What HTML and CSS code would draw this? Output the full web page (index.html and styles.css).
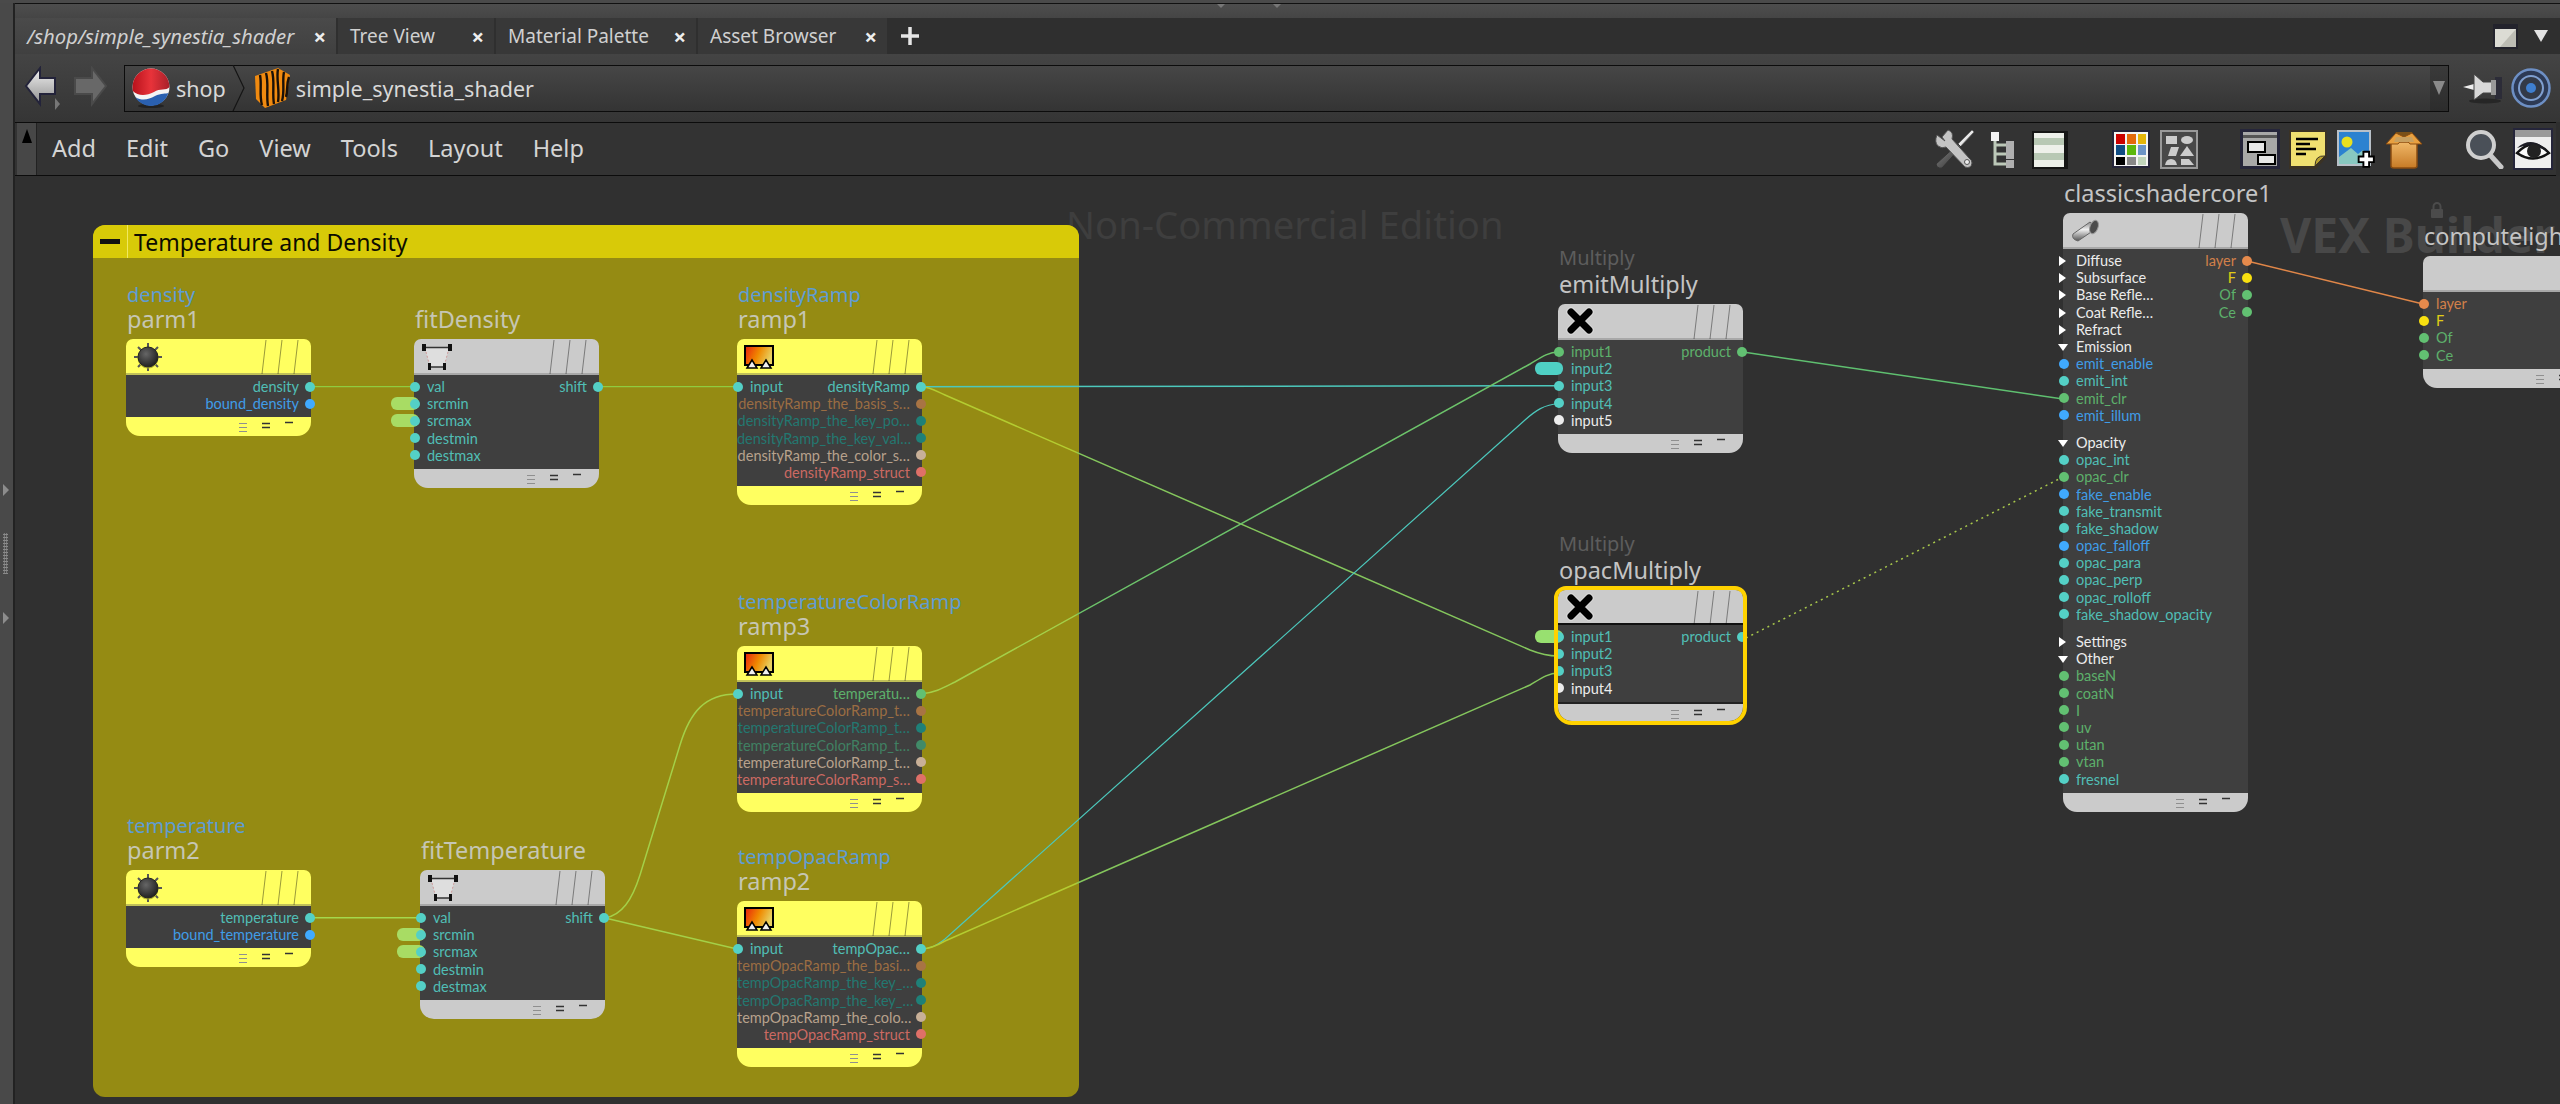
FILE: index.html
```html
<!DOCTYPE html>
<html lang="en">
<head>
  <meta charset="UTF-8" />
  <title>/shop/simple_synestia_shader</title>
  <link rel="stylesheet" href="styles.css">
</head>
<body>

  <!-- shared node glyphs -->
  <svg class="defs" width="0" height="0">
    <defs>
      <linearGradient id="rampFill" x1="0" x2="1" y1="0" y2="0.3">
        <stop offset="0" stop-color="#e8200c"/><stop offset="0.55" stop-color="#f08a00"/><stop offset="1" stop-color="#e8d060"/>
      </linearGradient>
      <radialGradient id="knobFill" cx="0.4" cy="0.35" r="0.7">
        <stop offset="0" stop-color="#666"/><stop offset="1" stop-color="#1c1c1c"/>
      </radialGradient>
      <linearGradient id="coreFill" x1="0" x2="0" y1="0" y2="1">
        <stop offset="0" stop-color="#8a8a8a"/><stop offset="0.4" stop-color="#f0f0f0"/><stop offset="1" stop-color="#555"/>
      </linearGradient>
      <linearGradient id="wireGreen" gradientUnits="userSpaceOnUse" x1="0" x2="2560" y1="0" y2="0">
        <stop offset="0.42" stop-color="#a4d048"/><stop offset="0.4215" stop-color="#6cc36a"/>
      </linearGradient>
      <linearGradient id="wireYellow" gradientUnits="userSpaceOnUse" x1="0" x2="2560" y1="0" y2="0">
        <stop offset="0.42" stop-color="#b4cc30"/><stop offset="0.4215" stop-color="#84c65c"/>
      </linearGradient>
      <linearGradient id="ballFill" x1="0" x2="1" y1="0" y2="0">
        <stop offset="0" stop-color="#b8121c"/><stop offset="0.5" stop-color="#e8333a"/><stop offset="1" stop-color="#a8202a"/>
      </linearGradient>
      <linearGradient id="arrowFill" x1="0" x2="0" y1="0" y2="1">
        <stop offset="0" stop-color="#f2f2f2"/><stop offset="1" stop-color="#8f8f8f"/>
      </linearGradient>
      <linearGradient id="boxFill" x1="0" x2="0" y1="0" y2="1">
        <stop offset="0" stop-color="#f0b868"/><stop offset="1" stop-color="#c67a26"/>
      </linearGradient>
      <linearGradient id="handleFill" x1="0" x2="1" y1="0" y2="1">
        <stop offset="0" stop-color="#8a8a8a"/><stop offset="1" stop-color="#2c2c2c"/>
      </linearGradient>
    </defs>
    <symbol id="flags" viewBox="0 0 185 36">
      <path d="M140 1 L136 35 M156 1 L152 35 M172 1 L168 35" fill="none" stroke="#000" stroke-opacity=".4" stroke-width="1"/>
    </symbol>
    <symbol id="footmarks" viewBox="0 0 185 19">
      <path d="M113 6.5h8 M113 10.5h8 M113 14.5h8" stroke="#8f8f8f" stroke-width="1.2"/>
      <path d="M136 6.5h8 M136 10.5h8" stroke="#333" stroke-width="1.5"/>
      <path d="M159 5.5h8" stroke="#333" stroke-width="1.5"/>
    </symbol>
    <symbol id="knob" viewBox="0 0 30 30">
      <path d="M15 1v4 M15 25v4 M1 15h4 M25 15h4 M5 5l3 3 M25 5l-3 3 M5 25l3-3 M25 25l-3-3" stroke="#555" stroke-width="2"/>
      <circle cx="15" cy="16" r="10.500" fill="#b8b830"/>
      <circle cx="15" cy="15" r="10" fill="url(#knobFill)" stroke="#222"/>
    </symbol>
    <symbol id="fit" viewBox="0 0 30 28">
      <path d="M3 5 L8 24 H22 L27 5Z" fill="#dedede"/>
      <path d="M3 5 L8 24 M27 5 L22 24" stroke="#d09a9a" stroke-width="1" stroke-dasharray="2 2"/>
      <path d="M3 4.5H27 M8 24H22" stroke="#333" stroke-width="1.6"/>
      <path d="M0 1h4v7H0z M26 1h4v7h-4z M6 20h3v7H6z M21 20h3v7h-3z" fill="#111"/>
    </symbol>
    <symbol id="ramp" viewBox="0 0 30 24">
      <rect x="1" y="1" width="28" height="19" fill="url(#rampFill)" stroke="#000" stroke-width="2"/>
      <path d="M3 23 L8 15 L13 23Z M17 23 L22 15 L27 23Z" fill="#f0f0f0" stroke="#000" stroke-width="1.500"/>
    </symbol>
    <symbol id="cross" viewBox="0 0 28 28">
      <path d="M5 5 L23 23 M23 5 L5 23" stroke="#d8d8d8" stroke-width="9" stroke-linecap="square"/>
      <path d="M5 5 L23 23 M23 5 L5 23" stroke="#000" stroke-width="7" stroke-linecap="round"/>
    </symbol>
    <symbol id="core" viewBox="0 0 30 24">
      <path d="M3 15 L20 3 L27 9 L8 22 Q1 20 3 15Z" fill="url(#coreFill)" stroke="#666"/>
      <ellipse cx="24" cy="8" rx="4" ry="7" transform="rotate(20 24 8)" fill="#4c4c4c" stroke="#999"/>
    </symbol>
  </svg>

  <div class="app">
    <div class="side">
      <span class="side-tri"></span>
      <span class="side-grip"></span>
      <span class="side-tri"></span>
    </div>

    <div class="main">
      <div class="sash"><i></i><i></i></div>

      <div class="tabs">
        <div class="tab tab-a active"><span class="tab-name">/shop/simple_synestia_shader</span><span class="tab-x">×</span></div>
        <div class="tab tab-b"><span class="tab-name">Tree View</span><span class="tab-x">×</span></div>
        <div class="tab tab-c"><span class="tab-name">Material Palette</span><span class="tab-x">×</span></div>
        <div class="tab tab-d"><span class="tab-name">Asset Browser</span><span class="tab-x">×</span></div>
        <svg class="tab-plus" width="20" height="20" viewBox="0 0 20 20"><path d="M10 1v18 M1 10h18" stroke="#e6e6e6" stroke-width="3.500"/></svg>
        <div class="tabs-end">
          <svg width="25" height="25" viewBox="0 0 25 25"><rect x="0" y="0" width="25" height="25" fill="#23232c"/><path d="M2 5h21v18H2z" fill="#dcdcd4"/><path d="M23 5v18H7z" fill="#bdbdb4"/></svg>
          <svg width="16" height="14" viewBox="0 0 16 14"><path d="M1 1h14L8 13z" fill="#e4e4e4"/></svg>
        </div>
      </div>

      <div class="pathbar">
        <svg class="nav" width="36" height="44" viewBox="0 0 36 44"><path d="M16 2 L2 20 L16 38 V28 H31 V12 H16Z" fill="url(#arrowFill)" stroke="#23233a" stroke-width="2"/><path d="M31 32 L36 38 L31 44Z" fill="#777"/></svg>
        <svg class="nav nav-fwd" width="36" height="44" viewBox="0 0 36 44"><path d="M20 2 L34 20 L20 38 V28 H3 V12 H20Z" fill="#686868" stroke="#4a4a4a" stroke-width="2"/></svg>
        <div class="pathbox">
          <svg class="path-icon" width="38" height="40" viewBox="0 0 38 40">
            <ellipse cx="19" cy="38" rx="13" ry="2" fill="#222"/>
            <circle cx="19" cy="19" r="18.500" fill="#f4f4f4"/>
            <path d="M0.500 19 A18.500 18.500 0 0 1 37.500 19 C34 23 28 20 22 24 C14 28 6 28 0.800 23Z" fill="url(#ballFill)"/>
            <path d="M3 29 C10 33 16 32 23 28 C29 25 34 26 36.500 25 A18.500 18.500 0 0 1 3 29Z" fill="#2a60b0"/>
          </svg>
          <span class="crumb">shop</span>
          <svg class="chev" width="14" height="46" viewBox="0 0 14 46"><path d="M1 0 L12 23 L1 46" fill="none" stroke="#151515" stroke-width="1.200"/></svg>
          <svg class="path-icon" width="38" height="42" viewBox="0 0 38 42">
            <path d="M2 9 L25 1 L37 8 L33 33 L12 41 L3 32Z" fill="#f08a10"/>
            <path d="M7 8 C9 18 6 28 9 38 M13 6 C16 16 13 28 15 39 M19 4 C22 14 19 26 21 37 M25 2 C23 12 27 24 25 35 M31 5 C29 14 32 24 29 34 M36 10 C33 18 35 24 33 30" stroke="#1a1008" stroke-width="2.400" fill="none"/>
          </svg>
          <span class="crumb crumb-last">simple_synestia_shader</span>
          <span class="path-drop"><i></i></span>
        </div>
        <svg class="pin" width="40" height="32" viewBox="0 0 40 32">
          <ellipse cx="22" cy="29" rx="16" ry="2.500" fill="#262626"/>
          <path d="M0 15 L11 12 V18Z" fill="#eee"/>
          <path d="M11 2 L20 10 H30 V21 H20 L11 28Z" fill="#d8d8d8" stroke="#444"/>
          <rect x="32" y="5" width="7" height="22" fill="#2c2c38"/>
          <rect x="28" y="8" width="5" height="15" fill="#999"/>
        </svg>
        <svg class="target" width="40" height="40" viewBox="0 0 40 40">
          <circle cx="20" cy="20" r="18.500" fill="#2d3a55" stroke="#6d8fc4" stroke-width="2.500"/>
          <circle cx="20" cy="20" r="12" fill="#333a48" stroke="#7f9fd0" stroke-width="2"/>
          <circle cx="20" cy="20" r="5" fill="#3f7fd0"/>
        </svg>
      </div>

      <div class="menubar">
        <div class="menu-handle"><i></i></div>
        <nav class="menus">
          <span>Add</span><span>Edit</span><span>Go</span><span>View</span><span>Tools</span><span>Layout</span><span>Help</span>
        </nav>
        <div class="tools">
          <svg width="40" height="40" viewBox="0 0 40 40">
            <!-- screwdriver -->
            <path d="M38 1 L40 3 L25 19 L22 17Z" fill="#e8e8e8" stroke="#666" stroke-width=".8"/>
            <path d="M24 15 L27 18 L8 39 Q3 40 2 35Z" fill="url(#handleFill)" stroke="#333"/>
            <!-- wrench -->
            <path d="M14 1 L8 8 L11 12 L3 6 Q0 13 4 17 Q8 20 12 18 L31 38 Q37 40 38 34 Q38 31 35 29 L18 10 Q20 3 14 1Z" fill="#c4c4c4" stroke="#555"/>
            <circle cx="33" cy="33" r="2.500" fill="#eee" stroke="#555"/>
          </svg>
          <svg width="40" height="40" viewBox="0 0 40 40">
            <path d="M13 10 V35 H24 M13 16 H24 M13 25 H24" fill="none" stroke="#bcc8b8" stroke-width="3"/>
            <rect x="9" y="3" width="8" height="9" fill="#f2f2f2"/>
            <rect x="24" y="12" width="8" height="9" fill="#b0b0b0"/><rect x="24" y="21" width="8" height="9" fill="#b0b0b0"/><rect x="24" y="31" width="8" height="8" fill="#b0b0b0"/>
          </svg>
          <svg width="40" height="40" viewBox="0 0 40 40">
            <rect x="2" y="2" width="36" height="38" fill="#161616"/>
            <rect x="4" y="4" width="30" height="34" fill="#eef0ea"/>
            <path d="M4 9h30v7H4z M4 24h30v7H4z" fill="#b8c8b4"/>
          </svg>
          <svg class="tool-gap" width="40" height="40" viewBox="0 0 40 40">
            <rect x="1" y="1" width="38" height="38" fill="#25253a"/>
            <rect x="3" y="3" width="34" height="34" fill="#f4f4f4"/>
            <path d="M5 5h9v10H5z" fill="#c00"/><path d="M16 5h9v10h-9z" fill="#e46a0c"/><path d="M27 5h8v10h-8z" fill="#e4b40c"/>
            <path d="M5 16h9v10H5z" fill="#104c84"/><path d="M16 16h9v10h-9z" fill="#5cb80c"/><path d="M27 16h8v10h-8z" fill="#6c94c8"/>
            <path d="M5 28h9v8H5z" fill="#000"/><path d="M16 28h9v8h-9z" fill="#888"/><path d="M27 28h8v8h-8z" fill="#c0d4bc"/>
          </svg>
          <svg width="40" height="40" viewBox="0 0 40 40">
            <rect x="2" y="2" width="36" height="37" fill="#484848" stroke="#999" stroke-width="2"/>
            <path d="M7 7h11v8H7z" fill="#ccc"/><ellipse cx="28" cy="11" rx="6" ry="4" fill="#ccc"/>
            <path d="M9 27 L12 18 H20 L17 27Z" fill="#ccc"/><path d="M28 17 L35 27 H21Z" fill="#ccc"/>
            <path d="M6 36 Q7 30 12 30 Q17 30 18 36Z" fill="#ccc"/><path d="M22 30 H30 L35 36 H22Z" fill="#ccc"/>
          </svg>
          <svg class="tool-gap" width="40" height="40" viewBox="0 0 40 40">
            <rect x="0" y="0" width="40" height="40" fill="#25253a"/>
            <rect x="3" y="3" width="34" height="34" fill="#a8a8a8"/>
            <rect x="3" y="6" width="34" height="3" fill="#555"/>
            <rect x="8" y="13" width="17" height="10" fill="#e8e8e8" stroke="#000" stroke-width="2"/>
            <rect x="18" y="26" width="17" height="9" fill="#e8e8e8" stroke="#000" stroke-width="2"/>
          </svg>
          <svg width="40" height="40" viewBox="0 0 40 40">
            <path d="M1 1 H39 V28 L28 40 H1Z" fill="#3a3224"/>
            <path d="M3 3 H37 V27 L27 37 H3Z" fill="#f0e070"/>
            <path d="M8 10h22 M8 15h14 M8 20h20 M8 25h10" stroke="#000" stroke-width="2.600"/>
            <path d="M37 27 Q27 26 27 37Z" fill="#b8a030" stroke="#3a3224"/>
          </svg>
          <svg width="40" height="40" viewBox="0 0 40 40">
            <rect x="1" y="1" width="34" height="36" fill="#b8c0c8"/>
            <rect x="3" y="3" width="30" height="32" fill="#2c82d0"/>
            <circle cx="11" cy="13" r="5.500" fill="#e8e020"/>
            <path d="M3 35 V28 L15 19 L22 25 L27 21 L33 28 V35Z" fill="#88c8c0"/>
            <path d="M27 31h5v-5h6v5h5v6h-5v5h-6v-5h-5z" transform="translate(-3 -2) scale(.95)" fill="#fff" stroke="#000" stroke-width="2"/>
          </svg>
          <svg width="40" height="40" viewBox="0 0 40 40">
            <path d="M7 13 V37 Q7 39 10 39 H30 Q33 39 33 37 V13Z" fill="url(#boxFill)" stroke="#8a4c10" stroke-width="1.500"/>
            <path d="M7 13 L12 3 H28 L33 13Z" fill="#7a5018"/>
            <path d="M12 4 L2 15 H14 L20 8 L26 15 H38 L28 4 L20 8Z" fill="#e8a040" stroke="#8a4c10"/>
            <path d="M12 8 H28 L30 13 H10Z" fill="#c8a060"/>
          </svg>
          <svg class="tool-gap" width="40" height="40" viewBox="0 0 40 40">
            <path d="M26 27 L36 38" stroke="#c8c8c8" stroke-width="5" stroke-linecap="round"/>
            <circle cx="16" cy="16" r="13" fill="#4a5058" stroke="#cfcfcf" stroke-width="4"/>
          </svg>
          <svg width="40" height="42" viewBox="0 0 40 42">
            <rect x="0" y="0" width="40" height="42" fill="#25253a"/>
            <rect x="2" y="2" width="36" height="38" fill="#eeeeee"/>
            <rect x="2" y="2" width="36" height="7" fill="#9a9a9a"/>
            <path d="M4 25 Q20 8 36 25 Q20 36 4 25Z" fill="#fafafa" stroke="#111" stroke-width="2.500"/>
            <path d="M4 20 Q20 6 36 25 Q20 13 4 20Z" fill="#1c1c24"/>
            <circle cx="21" cy="23" r="7" fill="#222"/>
          </svg>
        </div>
      </div>

      <div class="canvas">
        <div class="graph">

          <div class="wm wm-edition">Non-Commercial Edition</div>
          <div class="wm wm-vex">VEX Builder</div>
          <svg class="wm-lock" width="14" height="16" viewBox="0 0 14 16"><path d="M3.500 7 V4.500 A3.500 3.500 0 0 1 10.500 4.500 V7" fill="none" stroke="#4b4b4b" stroke-width="2"/><rect x="1" y="7" width="12" height="9" rx="1" fill="#4b4b4b"/></svg>

          <section class="netbox">
            <header class="netbox-head">
              <span class="netbox-min"><i></i></span>
              <span class="netbox-title">Temperature and Density</span>
            </header>
          </section>

          <svg class="wires" width="2560" height="1104" viewBox="0 0 2560 1104" fill="none">
            <path d="M311 386.700 L414 386.700" stroke="#8edc4c"/>
            <path d="M599 386.700 L737 386.700" stroke="#8edc4c"/>
            <path d="M311 917.700 L420 917.700" stroke="#a4d84c" stroke-width="1.600"/>
            <path d="M922 386.700 L1558 385.700" stroke="#4cc8bc" stroke-width="1.500"/>
            <path d="M922 387 C930 387 936 391 945 395 L1530 650 C1540 654 1548 656 1558 656" stroke="url(#wireYellow)" stroke-width="1.500"/>
            <path d="M605 918 C622 915 632 900 640 875 L680 745 C690 712 705 694 737 694" stroke="#a4d048" stroke-width="1.500"/>
            <path d="M605 918 L737 949" stroke="#a4d048" stroke-width="1.500"/>
            <path d="M922 693.700 C935 693 945 687 955 682 L1530 364 C1540 358 1548 352 1558 352" stroke="url(#wireGreen)" stroke-width="1.500"/>
            <path d="M921 949 C932 949 938 944 945 939 L1525 420 C1535 411 1545 404 1558 404" stroke="#4cc8bc" stroke-width="1.200"/>
            <path d="M921 949 C930 949 938 945 945 941 L1530 685 C1540 679 1548 673 1558 673" stroke="url(#wireYellow)" stroke-width="1.500"/>
            <path d="M1743 352 L2063 399" stroke="#5fc070" stroke-width="1.500"/>
            <path d="M1746 638 L2063 477" stroke="#a8c84c" stroke-width="1.500" stroke-dasharray="2 4"/>
            <path d="M2247 261 L2423 304" stroke="#e08648" stroke-width="1.500"/>
          </svg>

          <!-- parm1 -->
          <article class="node yellow n-parm1">
            <div class="caption"><span class="sub">density</span><span class="name">parm1</span></div>
            <div class="head"><svg class="ico ico-knob"><use href="#knob"/></svg><svg class="flags"><use href="#flags"/></svg></div>
            <div class="body">
              <div class="row"><span class="lbl out teal">density</span><i class="port r teal"></i></div>
              <div class="row"><span class="lbl out blue">bound_density</span><i class="port r blue"></i></div>
            </div>
            <div class="foot"><svg class="marks"><use href="#footmarks"/></svg></div>
          </article>

          <!-- fitDensity -->
          <article class="node grey n-fitdensity">
            <div class="caption"><span class="name">fitDensity</span></div>
            <div class="head"><svg class="ico ico-fit"><use href="#fit"/></svg><svg class="flags"><use href="#flags"/></svg></div>
            <div class="body">
              <div class="row"><i class="port l teal"></i><span class="lbl teal">val</span><span class="lbl out teal">shift</span><i class="port r teal"></i></div>
              <div class="row"><b class="stub lime"></b><i class="port l teal"></i><span class="lbl teal">srcmin</span></div>
              <div class="row"><b class="stub lime"></b><i class="port l teal"></i><span class="lbl teal">srcmax</span></div>
              <div class="row"><i class="port l teal"></i><span class="lbl teal">destmin</span></div>
              <div class="row"><i class="port l teal"></i><span class="lbl teal">destmax</span></div>
            </div>
            <div class="foot"><svg class="marks"><use href="#footmarks"/></svg></div>
          </article>

          <!-- ramp1 -->
          <article class="node yellow n-ramp1">
            <div class="caption"><span class="sub">densityRamp</span><span class="name">ramp1</span></div>
            <div class="head"><svg class="ico ico-ramp"><use href="#ramp"/></svg><svg class="flags"><use href="#flags"/></svg></div>
            <div class="body">
              <div class="row"><i class="port l teal"></i><span class="lbl teal">input</span><span class="lbl out teal">densityRamp</span><i class="port r teal"></i></div>
              <div class="row"><span class="lbl out brown">densityRamp_the_basis_s…</span><i class="port r brown"></i></div>
              <div class="row"><span class="lbl out dteal">densityRamp_the_key_po…</span><i class="port r dteal"></i></div>
              <div class="row"><span class="lbl out dteal">densityRamp_the_key_val…</span><i class="port r dteal"></i></div>
              <div class="row"><span class="lbl out tan">densityRamp_the_color_s…</span><i class="port r tan"></i></div>
              <div class="row"><span class="lbl out pink">densityRamp_struct</span><i class="port r pink"></i></div>
            </div>
            <div class="foot"><svg class="marks"><use href="#footmarks"/></svg></div>
          </article>

          <!-- ramp3 -->
          <article class="node yellow n-ramp3">
            <div class="caption"><span class="sub">temperatureColorRamp</span><span class="name">ramp3</span></div>
            <div class="head"><svg class="ico ico-ramp"><use href="#ramp"/></svg><svg class="flags"><use href="#flags"/></svg></div>
            <div class="body">
              <div class="row"><i class="port l teal"></i><span class="lbl teal">input</span><span class="lbl out green">temperatu…</span><i class="port r green"></i></div>
              <div class="row"><span class="lbl out brown">temperatureColorRamp_t…</span><i class="port r brown"></i></div>
              <div class="row"><span class="lbl out dteal">temperatureColorRamp_t…</span><i class="port r dteal"></i></div>
              <div class="row"><span class="lbl out dgreen">temperatureColorRamp_t…</span><i class="port r dgreen"></i></div>
              <div class="row"><span class="lbl out tan">temperatureColorRamp_t…</span><i class="port r tan"></i></div>
              <div class="row"><span class="lbl out pink">temperatureColorRamp_s…</span><i class="port r pink"></i></div>
            </div>
            <div class="foot"><svg class="marks"><use href="#footmarks"/></svg></div>
          </article>

          <!-- parm2 -->
          <article class="node yellow n-parm2">
            <div class="caption"><span class="sub">temperature</span><span class="name">parm2</span></div>
            <div class="head"><svg class="ico ico-knob"><use href="#knob"/></svg><svg class="flags"><use href="#flags"/></svg></div>
            <div class="body">
              <div class="row"><span class="lbl out teal">temperature</span><i class="port r teal"></i></div>
              <div class="row"><span class="lbl out blue">bound_temperature</span><i class="port r blue"></i></div>
            </div>
            <div class="foot"><svg class="marks"><use href="#footmarks"/></svg></div>
          </article>

          <!-- fitTemperature -->
          <article class="node grey n-fittemp">
            <div class="caption"><span class="name">fitTemperature</span></div>
            <div class="head"><svg class="ico ico-fit"><use href="#fit"/></svg><svg class="flags"><use href="#flags"/></svg></div>
            <div class="body">
              <div class="row"><i class="port l teal"></i><span class="lbl teal">val</span><span class="lbl out teal">shift</span><i class="port r teal"></i></div>
              <div class="row"><b class="stub lime"></b><i class="port l teal"></i><span class="lbl teal">srcmin</span></div>
              <div class="row"><b class="stub lime"></b><i class="port l teal"></i><span class="lbl teal">srcmax</span></div>
              <div class="row"><i class="port l teal"></i><span class="lbl teal">destmin</span></div>
              <div class="row"><i class="port l teal"></i><span class="lbl teal">destmax</span></div>
            </div>
            <div class="foot"><svg class="marks"><use href="#footmarks"/></svg></div>
          </article>

          <!-- ramp2 -->
          <article class="node yellow n-ramp2">
            <div class="caption"><span class="sub">tempOpacRamp</span><span class="name">ramp2</span></div>
            <div class="head"><svg class="ico ico-ramp"><use href="#ramp"/></svg><svg class="flags"><use href="#flags"/></svg></div>
            <div class="body">
              <div class="row"><i class="port l teal"></i><span class="lbl teal">input</span><span class="lbl out teal">tempOpac…</span><i class="port r teal"></i></div>
              <div class="row"><span class="lbl out brown">tempOpacRamp_the_basi…</span><i class="port r brown"></i></div>
              <div class="row"><span class="lbl out dteal">tempOpacRamp_the_key_…</span><i class="port r dteal"></i></div>
              <div class="row"><span class="lbl out dteal">tempOpacRamp_the_key_…</span><i class="port r dteal"></i></div>
              <div class="row"><span class="lbl out tan">tempOpacRamp_the_colo…</span><i class="port r tan"></i></div>
              <div class="row"><span class="lbl out pink">tempOpacRamp_struct</span><i class="port r pink"></i></div>
            </div>
            <div class="foot"><svg class="marks"><use href="#footmarks"/></svg></div>
          </article>

          <!-- emitMultiply -->
          <article class="node grey n-emit">
            <div class="caption"><span class="sub dim">Multiply</span><span class="name bright">emitMultiply</span></div>
            <div class="head"><svg class="ico ico-x"><use href="#cross"/></svg><svg class="flags"><use href="#flags"/></svg></div>
            <div class="body">
              <div class="row"><i class="port l green"></i><span class="lbl green">input1</span><span class="lbl out green">product</span><i class="port r green"></i></div>
              <div class="row"><b class="stub aqua"></b><span class="lbl teal">input2</span></div>
              <div class="row"><i class="port l teal"></i><span class="lbl teal">input3</span></div>
              <div class="row"><i class="port l teal"></i><span class="lbl teal">input4</span></div>
              <div class="row"><i class="port l white"></i><span class="lbl white">input5</span></div>
            </div>
            <div class="foot"><svg class="marks"><use href="#footmarks"/></svg></div>
          </article>

          <!-- opacMultiply -->
          <article class="node grey selected n-opac">
            <div class="caption"><span class="sub dim">Multiply</span><span class="name bright">opacMultiply</span></div>
            <div class="head"><svg class="ico ico-x"><use href="#cross"/></svg><svg class="flags"><use href="#flags"/></svg></div>
            <div class="body">
              <div class="row"><b class="stub mint"></b><i class="port l teal"></i><span class="lbl teal">input1</span><span class="lbl out teal">product</span><i class="port r teal"></i></div>
              <div class="row"><i class="port l teal"></i><span class="lbl teal">input2</span></div>
              <div class="row"><i class="port l teal"></i><span class="lbl teal">input3</span></div>
              <div class="row"><i class="port l white"></i><span class="lbl white">input4</span></div>
            </div>
            <div class="foot"><svg class="marks"><use href="#footmarks"/></svg></div>
          </article>

          <!-- classicshadercore1 -->
          <article class="node grey n-core">
            <div class="caption"><span class="name bright">classicshadercore1</span></div>
            <div class="head"><svg class="ico ico-core"><use href="#core"/></svg><svg class="flags"><use href="#flags"/></svg></div>
            <div class="body">
              <div class="row"><i class="tri closed"></i><span class="lbl white">Diffuse</span><span class="lbl out orange">layer</span><i class="port r orange"></i></div>
              <div class="row"><i class="tri closed"></i><span class="lbl white">Subsurface</span><span class="lbl out yellowc">F</span><i class="port r yellowc"></i></div>
              <div class="row"><i class="tri closed"></i><span class="lbl white">Base Refle…</span><span class="lbl out green">Of</span><i class="port r green"></i></div>
              <div class="row"><i class="tri closed"></i><span class="lbl white">Coat Refle…</span><span class="lbl out green">Ce</span><i class="port r green"></i></div>
              <div class="row"><i class="tri closed"></i><span class="lbl white">Refract</span></div>
              <div class="row"><i class="tri open"></i><span class="lbl white">Emission</span></div>
              <div class="row"><i class="port l blue"></i><span class="lbl blue">emit_enable</span></div>
              <div class="row"><i class="port l teal"></i><span class="lbl teal">emit_int</span></div>
              <div class="row"><i class="port l green"></i><span class="lbl green">emit_clr</span></div>
              <div class="row"><i class="port l blue"></i><span class="lbl blue">emit_illum</span></div>
              <div class="row-gap"></div>
              <div class="row"><i class="tri open"></i><span class="lbl white">Opacity</span></div>
              <div class="row"><i class="port l teal"></i><span class="lbl teal">opac_int</span></div>
              <div class="row"><i class="port l green"></i><span class="lbl green">opac_clr</span></div>
              <div class="row"><i class="port l blue"></i><span class="lbl blue">fake_enable</span></div>
              <div class="row"><i class="port l teal"></i><span class="lbl teal">fake_transmit</span></div>
              <div class="row"><i class="port l teal"></i><span class="lbl teal">fake_shadow</span></div>
              <div class="row"><i class="port l blue"></i><span class="lbl blue">opac_falloff</span></div>
              <div class="row"><i class="port l teal"></i><span class="lbl teal">opac_para</span></div>
              <div class="row"><i class="port l teal"></i><span class="lbl teal">opac_perp</span></div>
              <div class="row"><i class="port l teal"></i><span class="lbl teal">opac_rolloff</span></div>
              <div class="row"><i class="port l teal"></i><span class="lbl teal">fake_shadow_opacity</span></div>
              <div class="row-gap"></div>
              <div class="row"><i class="tri closed"></i><span class="lbl white">Settings</span></div>
              <div class="row"><i class="tri open"></i><span class="lbl white">Other</span></div>
              <div class="row"><i class="port l green"></i><span class="lbl green">baseN</span></div>
              <div class="row"><i class="port l green"></i><span class="lbl green">coatN</span></div>
              <div class="row"><i class="port l green"></i><span class="lbl green">I</span></div>
              <div class="row"><i class="port l green"></i><span class="lbl green">uv</span></div>
              <div class="row"><i class="port l green"></i><span class="lbl green">utan</span></div>
              <div class="row"><i class="port l green"></i><span class="lbl green">vtan</span></div>
              <div class="row"><i class="port l teal"></i><span class="lbl teal">fresnel</span></div>
            </div>
            <div class="foot"><svg class="marks"><use href="#footmarks"/></svg></div>
          </article>

          <!-- computelight, runs off the right edge -->
          <article class="node grey n-light">
            <div class="caption"><span class="name bright">computelight1</span></div>
            <div class="head"></div>
            <div class="body">
              <div class="row"><i class="port l orange"></i><span class="lbl orange">layer</span></div>
              <div class="row"><i class="port l yellowc"></i><span class="lbl yellowc">F</span><span class="lbl out green">clr</span></div>
              <div class="row"><i class="port l green"></i><span class="lbl green">Of</span></div>
              <div class="row"><i class="port l green"></i><span class="lbl green">Ce</span></div>
            </div>
            <div class="foot"><svg class="marks"><use href="#footmarks"/></svg></div>
          </article>

        </div>
      </div>
    </div>
  </div>

</body>
</html>
```

FILE: styles.css
```css
* {
  margin: 0;
  padding: 0;
  box-sizing: border-box;
}

html, body {
  width: 2560px;
  height: 1104px;
  overflow: hidden;
}

body {
  background: #2e2e2e;
  color: #cfcfcf;
  font-family: "Noto Sans", sans-serif;
}

.defs {
  position: absolute;
}

.app {
  display: flex;
  height: 1104px;
  border-top: 3px solid #4a4a4a;
}

/* Left sash */
.side {
  width: 15px;
  flex: none;
  background: #494949;
  border-right: 2px solid #222;
  display: flex;
  flex-direction: column;
  align-items: center;
  padding-top: 481px;
  padding-right: 2px;
}

.side-tri {
  width: 0;
  height: 0;
  border-left: 6px solid #8c8c8c;
  border-top: 6px solid transparent;
  border-bottom: 6px solid transparent;
}

.side-grip {
  width: 5px;
  height: 41px;
  margin: 37px 0 38px;
  background-image: radial-gradient(#8a8a8a 1px, transparent 1px);
  background-size: 2.500px 3px;
}

.main {
  flex: 1;
  min-width: 0;
  display: flex;
  flex-direction: column;
}

.sash {
  height: 15px;
  background: linear-gradient(#4d4d4d, #454545);
  border-top: 1px solid #111;
  display: flex;
  gap: 48px;
  padding-left: 1202px;
}

.sash i {
  width: 0;
  height: 0;
  border-top: 4px solid #777;
  border-left: 4px solid transparent;
  border-right: 4px solid transparent;
}

/* Tabs */
.tabs {
  height: 36px;
  display: flex;
  align-items: stretch;
  background: #2f2f2f;
}

.tab {
  display: flex;
  align-items: center;
  justify-content: space-between;
  margin-right: 2px;
  padding: 0 10px 0 12px;
  background: #383838;
  font-size: 19px;
  color: #d0d0d0;
}

.tab.active {
  background: linear-gradient(#4a4a4a, #404040);
  padding-left: 12px;
  font-size: 20.300px;
  font-style: italic;
}

.tab-a { width: 321px; }
.tab-b { width: 156px; }
.tab-c { width: 200px; }
.tab-d { width: 189px; }

.tab-x {
  font-weight: 700;
  font-style: normal;
  font-size: 22px;
  color: #eee;
}

.tab-plus {
  align-self: center;
  margin-left: 11px;
}

.tabs-end {
  margin-left: auto;
  padding-right: 11px;
  display: flex;
  align-items: center;
  gap: 15px;
}

/* Path bar */
.pathbar {
  height: 68px;
  flex: none;
  display: flex;
  align-items: center;
  background: linear-gradient(#444, #353535);
  padding-left: 9px;
}

.nav {
  margin-right: 12px;
}

.nav-fwd {
  margin-right: 16px;
}

.pathbox {
  width: 2325px;
  height: 47px;
  display: flex;
  align-items: center;
  border: 1px solid #0c0c0c;
  background: linear-gradient(#464646, #343434);
  padding-left: 7px;
  font-size: 21.500px;
  color: #d8d8d8;
}

.crumb {
  margin-left: 6px;
}

.chev {
  margin: 0 7px 0 6px;
}

.crumb-last {
  margin-left: 5px;
}

.path-drop {
  margin-left: auto;
  width: 18px;
  height: 100%;
  display: flex;
  align-items: center;
  justify-content: center;
  background: linear-gradient(#3a3a3a, #2c2c2c);
}

.path-drop i {
  width: 0;
  height: 0;
  border-top: 14px solid #8a8a8a;
  border-left: 6px solid transparent;
  border-right: 6px solid transparent;
}

.pin {
  margin-left: 14px;
}

.target {
  margin-left: 8px;
}

/* Menu bar */
.menubar {
  height: 54px;
  flex: none;
  display: flex;
  align-items: center;
  background: #333;
  border-top: 1px solid #0c0c0c;
  border-bottom: 1px solid #0c0c0c;
  margin-right: 4px;
}

.menu-handle {
  width: 20px;
  height: 100%;
  margin-left: 2px;
  background: #474747;
  border-right: 1px solid #222;
  display: flex;
  justify-content: center;
  padding-top: 6px;
}

.menu-handle i {
  width: 0;
  height: 0;
  border-bottom: 14px solid #000;
  border-left: 5px solid transparent;
  border-right: 5px solid transparent;
}

.menus {
  display: flex;
  gap: 30px;
  padding-left: 15px;
  padding-bottom: 2px;
  font-size: 23.500px;
  color: #d4d4d4;
}

.tools {
  margin-left: auto;
  display: flex;
  align-items: center;
  gap: 8px;
  padding-right: 3px;
}

.tool-gap {
  margin-left: 33px;
}

/* Node canvas */
.canvas {
  flex: 1;
  position: relative;
  overflow: hidden;
  background: #303030;
}

/* same coordinates as the window, so the node positions read straight */
.graph {
  position: absolute;
  left: -15px;
  top: -176px;
  width: 2560px;
  height: 1104px;
}

.wm {
  position: absolute;
  white-space: nowrap;
  color: #3e3e3e;
}

.wm-edition {
  left: 1066px;
  top: 199px;
  font-size: 38.200px;
  line-height: 50px;
}

.wm-vex {
  left: 2280px;
  top: 205px;
  font-size: 48px;
  line-height: 60px;
  font-weight: 700;
  color: #484848;
}

.wm-lock {
  position: absolute;
  left: 2430px;
  top: 202px;
}

.netbox {
  position: absolute;
  left: 93px;
  top: 225px;
  width: 986px;
  height: 872px;
  background: #958b13;
  border-radius: 12px;
  overflow: hidden;
}

.netbox-head {
  height: 33px;
  display: flex;
  align-items: center;
  background: #d8ca08;
  color: #0c0c00;
  font-size: 23px;
}

.netbox-min {
  width: 35px;
  height: 100%;
  display: flex;
  align-items: center;
  justify-content: center;
  border-right: 1px solid #f0e860;
}

.netbox-min i {
  width: 20px;
  height: 5px;
  background: #111;
}

.netbox-title {
  margin-left: 6px;
}

.wires {
  position: absolute;
  left: 0;
  top: 0;
}

/* Nodes */
.node {
  position: absolute;
  width: 185px;
  font-family: "Lato", sans-serif;
  font-size: 14.500px;
}

.n-parm1 { left: 126px; top: 339px; }
.n-fitdensity { left: 414px; top: 339px; }
.n-ramp1 { left: 737px; top: 339px; }
.n-ramp3 { left: 737px; top: 646px; }
.n-parm2 { left: 126px; top: 870px; }
.n-fittemp { left: 420px; top: 870px; }
.n-ramp2 { left: 737px; top: 901px; }
.n-emit { left: 1558px; top: 304px; }
.n-opac { left: 1558px; top: 590px; }
.n-core { left: 2063px; top: 213px; }
.n-light { left: 2423px; top: 256px; }

.caption {
  position: absolute;
  left: 1px;
  bottom: calc(100% + 8px);
  display: flex;
  flex-direction: column;
  white-space: nowrap;
  line-height: 24px;
  font-family: "Noto Sans", sans-serif;
}

.sub {
  font-size: 20px;
  color: #5f9dd2;
}

.sub.dim {
  color: #5d5d5d;
  margin-bottom: 2px;
}

.name {
  font-size: 23.500px;
  color: #c6c6b4;
}

.name.bright {
  color: #c4c4c4;
}

.head {
  position: relative;
  height: 36px;
  border-radius: 7px 7px 0 0;
  border-bottom: 2px solid #a8a8a8;
}

.body {
  background: #3f3f3f;
  padding: 3px 0 5px;
}

.foot {
  height: 19px;
  border-radius: 0 0 14px 14px;
}

.yellow .head,
.yellow .foot {
  background: #ffff60;
}

.yellow .head {
  border-bottom-color: #c0c058;
}

.grey .head,
.grey .foot {
  background: #cbcbcb;
}

.selected::after {
  content: "";
  position: absolute;
  inset: -4px;
  border: 4px solid #ffd200;
  border-radius: 12px 12px 18px 18px;
  pointer-events: none;
}

.selected .head {
  height: 35px;
  border-bottom: 2px solid #111;
}

.selected .foot {
  border-top: 2px solid #222;
}

.ico {
  position: absolute;
}

.ico-knob { left: 7px; top: 3px; width: 30px; height: 30px; }
.ico-fit { left: 8px; top: 4px; width: 30px; height: 28px; }
.ico-ramp { left: 7px; top: 6px; width: 30px; height: 24px; }
.ico-x { left: 8px; top: 3px; width: 28px; height: 28px; }
.ico-core { left: 7px; top: 6px; width: 30px; height: 24px; }

.flags {
  position: absolute;
  left: 0;
  top: 0;
  width: 185px;
  height: 36px;
}

.marks {
  display: block;
  width: 185px;
  height: 19px;
}

.row {
  position: relative;
  height: 17.200px;
  display: flex;
  align-items: center;
  padding-right: 12px;
  line-height: 17px;
  white-space: nowrap;
}

.row-gap {
  height: 10px;
}

.lbl {
  opacity: .88;
  margin-left: 13px;
}

.lbl.white {
  opacity: 1;
}

.lbl.out {
  margin-left: auto;
}

.port {
  position: absolute;
  top: 3.500px;
  width: 10px;
  height: 10px;
  border-radius: 50%;
  background: currentColor;
}

.port.l { left: -4px; }
.port.r { right: -4px; }

.stub {
  position: absolute;
  left: -23px;
  top: 2px;
  width: 28px;
  height: 13px;
  border-radius: 6px;
}

.lime { background: #a8dc64; }
.aqua { background: #4fd0c4; }
.mint { background: #98e070; }

.tri {
  position: absolute;
  left: -4px;
  width: 0;
  height: 0;
}

.tri.closed {
  top: 4px;
  border-left: 7px solid #fff;
  border-top: 5px solid transparent;
  border-bottom: 5px solid transparent;
}

.tri.open {
  top: 6px;
  left: -5px;
  border-top: 7px solid #fff;
  border-left: 5px solid transparent;
  border-right: 5px solid transparent;
}

.teal { color: #54d0c6; }
.blue { color: #40aaff; }
.green { color: #62c072; }
.orange { color: #e58a4c; }
.yellowc { color: #f8e010; }
.white { color: #ececec; }
.brown { color: #a87444; }
.dteal { color: #1f8078; }
.dgreen { color: #418a68; }
.tan { color: #c8b098; }
.pink { color: #df7068; }
```
